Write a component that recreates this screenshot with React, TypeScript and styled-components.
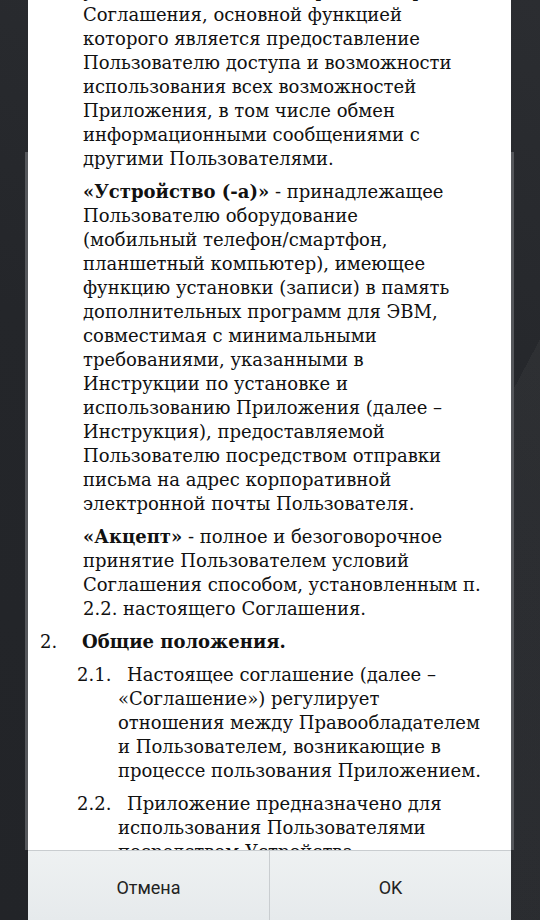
import React from "react";
import styled, { createGlobalStyle } from "styled-components";

const Global = createGlobalStyle`
  html, body { margin: 0; padding: 0; background: #25272b; }
  body { width: 540px; height: 920px; overflow: hidden; }
`;

const Screen = styled.div`
  position: relative;
  width: 540px;
  height: 920px;
  overflow: hidden;
  background:
    linear-gradient(118deg, transparent 0 70%, rgba(255,255,255,0.035) 70% 100%),
    linear-gradient(200deg, #2b2d31 0%, #24262a 45%, #222428 100%);
  display: flex;
  padding-left: 28px;
  box-sizing: border-box;
`;

const Dialog = styled.div`
  position: relative;
  width: 483px;
  height: 920px;
  background: #ffffff;
  display: flex;
  flex-direction: column;

  &::before, &::after {
    content: "";
    position: absolute;
    top: 152px;
    bottom: 70px;
    width: 3px;
    background: #55575b;
  }
  &::before { left: -3px; }
  &::after { right: -3px; }
`;

const Scroll = styled.div`
  flex: 1;
  overflow: hidden;
`;

const Content = styled.div`
  margin-top: -21px;
  font-family: "DejaVu Serif", "Liberation Serif", serif;
  font-size: 18px;
  line-height: 24px;
  color: #111;
  display: flex;
  flex-direction: column;
  gap: 9px;
`;

const Para = styled.div`
  padding-left: 55px;
  white-space: nowrap;
`;

const B = styled.b`
  font-weight: 700;
`;

const Heading = styled.div`
  padding-left: 54px;
  text-indent: -42px;
  white-space: nowrap;
  font-weight: 700;
`;

const HeadNum = styled.span`
  display: inline-block;
  width: 42px;
  text-indent: 0;
  font-weight: 400;
`;

const Item = styled.div`
  padding-left: 90px;
  text-indent: -41px;
  white-space: nowrap;
`;

const ItemNum = styled.span`
  display: inline-block;
  width: 50px;
  text-indent: 0;
`;

const ButtonBar = styled.div`
  height: 69px;
  display: flex;
  border-top: 1px solid #c9cdd0;
  background: linear-gradient(180deg, #eef1f2 0%, #e6eaec 100%);
`;

const Btn = styled.button`
  flex: 1;
  border: none;
  background: transparent;
  font-family: Roboto, "Noto Sans", sans-serif;
  font-size: 18px;
  color: #222;
  padding: 4px 0 0;
  & + & { border-left: 1px solid #c9cdd0; }
`;

const lines = (arr: string[]) =>
  arr.map((l, i) => (
    <React.Fragment key={i}>
      {i > 0 && <br />}
      {l}
    </React.Fragment>
  ));

export default function App() {
  return (
    <>
      <Global />
      <Screen>
        <Dialog>
          <Scroll>
            <Content>
              <Para>
                {lines([
                  "устанавливаемая на Устройство в рамках",
                  "Соглашения, основной функцией",
                  "которого является предоставление",
                  "Пользователю доступа и возможности",
                  "использования всех возможностей",
                  "Приложения, в том числе обмен",
                  "информационными сообщениями с",
                  "другими Пользователями.",
                ])}
              </Para>
              <Para>
                <B>«Устройство (-а)»</B> - принадлежащее
                <br />
                {lines([
                  "Пользователю оборудование",
                  "(мобильный телефон/смартфон,",
                  "планшетный компьютер), имеющее",
                  "функцию установки (записи) в память",
                  "дополнительных программ для ЭВМ,",
                  "совместимая с минимальными",
                  "требованиями, указанными в",
                  "Инструкции по установке и",
                  "использованию Приложения (далее –",
                  "Инструкция), предоставляемой",
                  "Пользователю посредством отправки",
                  "письма на адрес корпоративной",
                  "электронной почты Пользователя.",
                ])}
              </Para>
              <Para>
                <B>«Акцепт»</B> - полное и безоговорочное
                <br />
                {lines([
                  "принятие Пользователем условий",
                  "Соглашения способом, установленным п.",
                  "2.2. настоящего Соглашения.",
                ])}
              </Para>
              <Heading>
                <HeadNum>2.</HeadNum>Общие положения.
              </Heading>
              <Item>
                <ItemNum>2.1.</ItemNum>
                {lines([
                  "Настоящее соглашение (далее –",
                  "«Соглашение») регулирует",
                  "отношения между Правообладателем",
                  "и Пользователем, возникающие в",
                  "процессе пользования Приложением.",
                ])}
              </Item>
              <Item>
                <ItemNum>2.2.</ItemNum>
                {lines([
                  "Приложение предназначено для",
                  "использования Пользователями",
                  "посредством Устройства",
                ])}
              </Item>
            </Content>
          </Scroll>
          <ButtonBar>
            <Btn>Отмена</Btn>
            <Btn>OK</Btn>
          </ButtonBar>
        </Dialog>
      </Screen>
    </>
  );
}
